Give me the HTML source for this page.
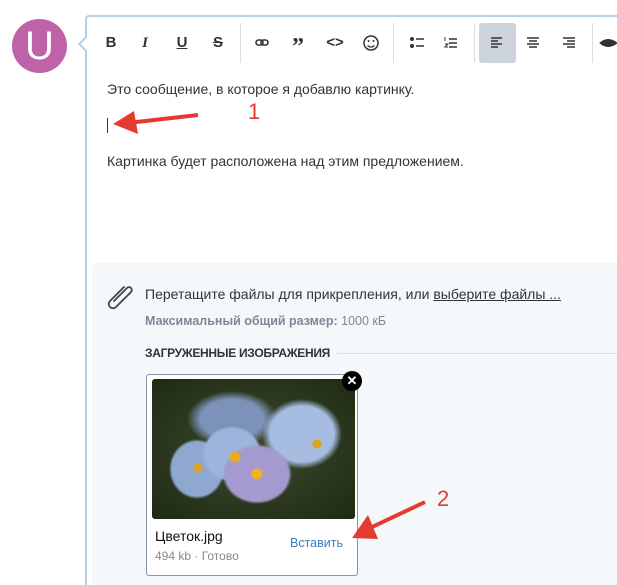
<!DOCTYPE html>
<html><head><meta charset="utf-8"><style>
*{margin:0;padding:0;box-sizing:border-box}
html,body{width:617px;height:585px;overflow:hidden}
body{background:#fff;font-family:"Liberation Sans",sans-serif;position:relative;color:#333}
.av{position:absolute;left:12px;top:19px;width:55px;height:54px;border-radius:50%;background:#c062a8;color:#fff;font-size:40px;text-align:center;line-height:54px}
.ed{position:absolute;left:85px;top:15px;width:532px;height:570px;border:2px solid #b7d0e6;border-right:none;border-bottom:none;border-radius:4px 0 0 0;background:#fff}
.tip{position:absolute;left:80px;top:39px;width:10px;height:10px;background:#fff;border-left:2px solid #b7d0e6;border-bottom:2px solid #b7d0e6;transform:rotate(45deg)}
.tb{position:absolute;top:23px;height:40px;font-size:15px;font-weight:bold;color:#333;line-height:40px;text-align:center}
.sep{position:absolute;top:23px;width:1px;height:40px;background:#d8dde3}
.t{position:absolute;font-size:14px;color:#333;white-space:nowrap}
.att{position:absolute;left:92px;top:263px;width:525px;height:322px;background:#f5f8fb;border-radius:6px 0 0 0}
.card{position:absolute;left:146px;top:374px;width:212px;height:202px;border:1px solid #8a95a3;border-radius:3px;background:#fff}
.img{position:absolute;left:5px;top:4px;width:203px;height:140px;border-radius:3px;background:
radial-gradient(circle at 105px 95px,#f0b020 5px,transparent 6px),
radial-gradient(circle at 83px 78px,#e8a820 5px,transparent 6px),
radial-gradient(circle at 46px 89px,#e0a020 4px,transparent 5px),
radial-gradient(circle at 165px 65px,#e0a020 4px,transparent 5px),
radial-gradient(ellipse 35px 30px at 105px 95px,#a59ad0 90%,transparent),
radial-gradient(ellipse 30px 28px at 80px 75px,#9db5dc 90%,transparent),
radial-gradient(ellipse 28px 30px at 45px 90px,#8fa8d0 90%,transparent),
radial-gradient(ellipse 40px 35px at 150px 55px,#a6bce0 80%,transparent),
radial-gradient(ellipse 45px 28px at 80px 40px,#7d92b8 70%,transparent),
radial-gradient(ellipse at 50% 50%,#3d4a30,#1e2a12)}
</style></head><body>
<div class="av">U</div>
<div class="ed"></div><div class="tip"></div>
<div class="tb" style="left:100px;width:22px">B</div>
<div class="tb" style="left:134px;width:22px;font-style:italic;font-family:'Liberation Serif',serif">I</div>
<div class="tb" style="left:171px;width:22px;text-decoration:underline">U</div>
<div class="tb" style="left:207px;width:22px;text-decoration:line-through">S</div>
<div class="sep" style="left:240px"></div>
<div class="tb" style="left:287px;width:22px;font-size:24px;font-family:'Liberation Serif',serif;line-height:48px">”</div>
<div class="tb" style="left:324px;width:22px">&lt;&gt;</div>
<div class="sep" style="left:393px"></div>
<div class="sep" style="left:474px"></div>
<div style="position:absolute;left:479px;top:23px;width:37px;height:40px;background:#cdd3dc;border-radius:3px"></div>
<div class="sep" style="left:592px"></div>
<svg style="position:absolute;left:0;top:0" width="617" height="585" fill="none" stroke="#333">
<rect x="256" y="40" width="7" height="5" rx="2.5" stroke-width="1.6"/><rect x="261" y="40" width="7" height="5" rx="2.5" stroke-width="1.6"/>
<circle cx="371" cy="43" r="7" stroke-width="1.5"/><circle cx="368.5" cy="41" r="1" fill="#333" stroke="none"/><circle cx="373.5" cy="41" r="1" fill="#333" stroke="none"/><path d="M367.5 45.5q3.5 3 7 0" stroke-width="1.3"/>
<g fill="#333" stroke="none"><circle cx="412" cy="39" r="2"/><circle cx="412" cy="46" r="2"/></g>
<path d="M416 39h8M416 46h8M449 39h8M449 43h8M449 47h8M491 38h11M491 41h7M491 44h11M491 47h7M527 38h12M529 41h8M527 44h12M529 47h8M563 38h12M567 41h8M563 44h12M567 47h8" stroke-width="1.6"/>
<path d="M445 37v4M445 44h3l-3 3h3" stroke-width="1"/>
<path d="M600 43q8-7 17 0q-9 7-17 0z" fill="#333"/>
</svg>
<div class="t" style="left:107px;top:81px">Это сообщение, в которое я добавлю картинку.</div>
<div style="position:absolute;left:107px;top:118px;width:1px;height:15px;background:#333"></div>
<div class="t" style="left:107px;top:153px">Картинка будет расположена над этим предложением.</div>
<div class="att"></div>
<div class="t" style="left:145px;top:286px">Перетащите файлы для прикрепления, или <span style="text-decoration:underline">выберите файлы ...</span></div>
<div class="t" style="left:145px;top:314px;font-size:12.5px;color:#7d8796"><b>Максимальный общий размер:</b> 1000 кБ</div>
<div class="t" style="left:145px;top:346px;font-size:12px;font-weight:bold;color:#333;letter-spacing:-0.3px">ЗАГРУЖЕННЫЕ ИЗОБРАЖЕНИЯ</div>
<div style="position:absolute;left:337px;top:353px;width:290px;height:1px;background:#dde2e8"></div>
<div class="card"><div class="img"></div>
<div class="t" style="left:8px;top:153px;font-size:14px;color:#111">Цветок.jpg</div>
<div class="t" style="left:8px;top:174px;font-size:12px;color:#888">494 kb · Готово</div>
<div class="t" style="left:143px;top:161px;font-size:12.5px;color:#3a7cc4">Вставить</div>
</div>
<div style="position:absolute;left:342px;top:371px;width:20px;height:20px;border-radius:50%;background:#000;color:#fff;font-size:13px;font-weight:bold;text-align:center;line-height:20px">✕</div>
<svg style="position:absolute;left:0;top:0" width="617" height="585">
<path d="M124 287l-14 14a4 4 0 0 0 6 6l15-15a2.5 2.5 0 0 0-4-4l-13 13" fill="none" stroke="#444" stroke-width="1.8" stroke-linecap="round"/>
<line x1="198" y1="115" x2="128" y2="123" stroke="#e53a30" stroke-width="4"/>
<polygon points="113,124 134,111 138,134" fill="#e53a30"/>
<line x1="425" y1="502" x2="370" y2="528" stroke="#e53a30" stroke-width="4"/>
<polygon points="352,538 368,515 378,539" fill="#e53a30"/>
</svg>
<div class="t" style="left:248px;top:99px;font-size:22px;color:#e53a30">1</div>
<div class="t" style="left:437px;top:486px;font-size:22px;color:#e53a30">2</div>
</body></html>
